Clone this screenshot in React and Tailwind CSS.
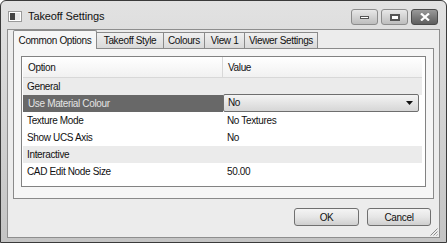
import React from 'react';

const rows = [
  { label: 'General', kind: 'group' },
  { label: 'Use Material Colour', value: 'No', kind: 'selected' },
  { label: 'Texture Mode', value: 'No Textures' },
  { label: 'Show UCS Axis', value: 'No' },
  { label: 'Interactive', kind: 'group' },
  { label: 'CAD Edit Node Size', value: '50.00' },
];

const tabs = ['Common Options', 'Takeoff Style', 'Colours', 'View 1', 'Viewer Settings'];
const tabWidths = ['w-[84px]', 'w-[67px]', 'w-[41px]', 'w-[40px]', 'w-[73px]'];

function CaptionButton({ children, dark }) {
  return (
    <div
      className={
        'h-[16px] flex items-center justify-center rounded-[3px] border ' +
        (dark
          ? 'w-[27px] border-[#4a4a4a] bg-gradient-to-b from-[#9a9a9a] to-[#5e5e5e]'
          : 'w-[27px] border-[#8c8c8c] bg-gradient-to-b from-[#e8e8e8] to-[#bdbdbd]')
      }
    >
      {children}
    </div>
  );
}

function Row({ row }) {
  if (row.kind === 'group') {
    return (
      <div className="h-[17px] flex items-center bg-[#ebebeb] px-[4px] text-[#111]">{row.label}</div>
    );
  }
  if (row.kind === 'selected') {
    return (
      <div className="h-[17px] flex">
        <div className="w-[200px] flex items-center bg-[#686868] px-[5px] text-[#e4e4e4]">{row.label}</div>
        <div className="flex-1 flex items-center bg-white pr-[3px]">
          <div className="flex-1 h-[18px] -mt-[2px] flex items-center justify-between rounded-[2px] border border-[#6e6e6e] bg-gradient-to-b from-[#f4f4f4] to-[#d6d6d6] pl-[4px] pr-[5px] text-[#111]">
            <span>No</span>
            <svg width="7" height="4" viewBox="0 0 7 4">
              <path d="M0 0h7L3.5 4z" fill="#111" />
            </svg>
          </div>
        </div>
      </div>
    );
  }
  return (
    <div className="h-[17px] flex text-[#111]">
      <div className="w-[200px] flex items-center px-[4px]">{row.label}</div>
      <div className="flex-1 flex items-center px-[4px]">{row.value}</div>
    </div>
  );
}

export default function App() {
  return (
    <div
      className="w-[447px] h-[243px] flex flex-col rounded-t-[6px] border border-[#3a3a3a] bg-gradient-to-b from-[#e2e2e2] via-[#d2d2d2] to-[#c4c4c4] text-[10px] tracking-[-0.35px]"
      style={{ fontFamily: '"Liberation Sans", Arial, sans-serif' }}
    >
      {/* title bar */}
      <div className="h-[28px] flex items-start pl-[8px] pr-[8px] pt-[8px]">
        <div className="mt-[3px] w-[12px] h-[9px] flex border border-white bg-[#e8e8e8] shadow-[0_0_0_1px_#9a9a9a]">
          <div className="w-[5px] bg-[#444]" />
        </div>
        <div className="ml-[7px] text-[11px] tracking-[-0.1px] text-[#111] leading-[14px]">Takeoff Settings</div>
        <div className="ml-auto flex gap-[3px]">
          <CaptionButton>
            <div className="w-[9px] h-[3px] border border-[#555] bg-white" />
          </CaptionButton>
          <CaptionButton>
            <div className="w-[10px] h-[7px] border-2 border-[#555] bg-white" />
          </CaptionButton>
          <CaptionButton dark>
            <svg width="10" height="8" viewBox="0 0 10 8">
              <path d="M1 0.5l8 7M9 0.5l-8 7" stroke="#fff" strokeWidth="2.2" />
            </svg>
          </CaptionButton>
        </div>
      </div>

      {/* client area */}
      <div className="flex-1 mx-[6px] mb-[4px] flex flex-col border border-[#8e8e8e] bg-[#ececec]">
        {/* tab strip */}
        <div className="h-[18px] flex items-end pl-[5px]">
          {tabs.map((t, i) =>
            i === 0 ? (
              <div
                key={t}
                className={tabWidths[i] + ' h-[19px] -mb-[1px] relative z-10 flex items-center justify-center border border-b-0 border-[#8a8a8a] rounded-t-[2px] bg-[#f6f6f6] text-[#111]'}
              >
                {t}
              </div>
            ) : (
              <div
                key={t}
                className={tabWidths[i] + ' h-[16px] flex items-center justify-center border border-l-0 border-b-0 border-[#8a8a8a] bg-gradient-to-b from-[#f0f0f0] to-[#d9d9d9] text-[#111]'}
              >
                {t}
              </div>
            )
          )}
        </div>

        {/* tab panel */}
        <div className="h-[151px] ml-[5px] mr-[5px] border border-[#8a8a8a] bg-[#f6f6f6] pt-[7px] pl-[7px] pr-[7px] pb-[11px] flex">
          <div className="flex-1 flex flex-col border border-[#828282] bg-white pl-[1px] pr-[3px]">
            <div className="h-[21px] flex border-b border-[#d8d8d8] bg-gradient-to-b from-white to-[#f1f1f1] text-[#111]">
              <div className="w-[200px] flex items-center px-[5px] border-r border-[#d8d8d8]">Option</div>
              <div className="flex-1 flex items-center px-[5px]">Value</div>
            </div>
            {rows.map((r) => (
              <Row key={r.label} row={r} />
            ))}
          </div>
        </div>

        {/* buttons */}
        <div className="flex-1 flex justify-end items-start pt-[9px] pr-[8px] gap-[8px] relative">
          <button className="w-[65px] h-[18px] flex items-center justify-center rounded-[3px] border border-[#707070] bg-gradient-to-b from-[#f4f4f4] via-[#e6e6e6] to-[#cfcfcf] text-[#111] text-[10px]">
            OK
          </button>
          <button className="w-[64px] h-[18px] flex items-center justify-center rounded-[3px] border border-[#707070] bg-gradient-to-b from-[#f4f4f4] via-[#e6e6e6] to-[#cfcfcf] text-[#111] text-[10px]">
            Cancel
          </button>
          <svg className="absolute right-[1px] bottom-[1px]" width="9" height="9" viewBox="0 0 9 9">
            <path d="M8.5 1.5L1.5 8.5M8.5 4.5L4.5 8.5M8.5 7.5L7.5 8.5" stroke="#8a8a8a" strokeWidth="1" />
          </svg>
        </div>
      </div>
    </div>
  );
}
